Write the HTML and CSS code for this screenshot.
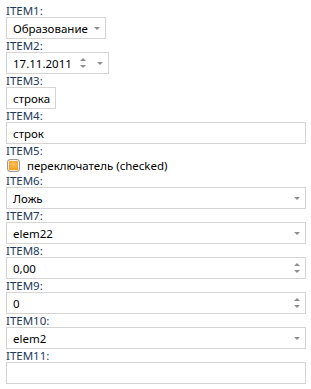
FILE: index.html
```html
<!DOCTYPE html>
<html lang="ru">
<head>
    <meta charset="UTF-8">
    <title>Form</title>
    <link rel="stylesheet" href="styles.css">
</head>
<body>
    <div class="form">
        <div class="item">
            <div class="caption">ITEM1:</div>
            <div class="editor w-combo">
                <span class="value">Образование</span>
                <span class="btn drop"><span class="tri-down"></span></span>
            </div>
        </div>
        <div class="item">
            <div class="caption">ITEM2:</div>
            <div class="editor w-date">
                <span class="value">17.11.2011</span>
                <span class="btn spin"><span class="tri-up"></span><span class="tri-down"></span></span>
                <span class="btn drop"><span class="tri-down"></span></span>
            </div>
        </div>
        <div class="item">
            <div class="caption">ITEM3:</div>
            <div class="editor w-short">
                <span class="value">строка</span>
            </div>
        </div>
        <div class="item">
            <div class="caption">ITEM4:</div>
            <div class="editor">
                <span class="value">строк</span>
            </div>
        </div>
        <div class="item">
            <div class="caption">ITEM5:</div>
            <label class="check">
                <span class="check-box"></span>
                <span>переключатель (checked)</span>
            </label>
        </div>
        <div class="item">
            <div class="caption">ITEM6:</div>
            <div class="editor">
                <span class="value">Ложь</span>
                <span class="btn drop"><span class="tri-down"></span></span>
            </div>
        </div>
        <div class="item">
            <div class="caption">ITEM7:</div>
            <div class="editor">
                <span class="value">elem22</span>
                <span class="btn drop"><span class="tri-down"></span></span>
            </div>
        </div>
        <div class="item">
            <div class="caption">ITEM8:</div>
            <div class="editor">
                <span class="value">0,00</span>
                <span class="btn spin"><span class="tri-up"></span><span class="tri-down"></span></span>
            </div>
        </div>
        <div class="item">
            <div class="caption">ITEM9:</div>
            <div class="editor">
                <span class="value">0</span>
                <span class="btn spin"><span class="tri-up"></span><span class="tri-down"></span></span>
            </div>
        </div>
        <div class="item">
            <div class="caption">ITEM10:</div>
            <div class="editor">
                <span class="value">elem2</span>
                <span class="btn drop"><span class="tri-down"></span></span>
            </div>
        </div>
        <div class="item">
            <div class="caption">ITEM11:</div>
            <div class="editor">
                <span class="value"></span>
            </div>
        </div>
    </div>
</body>
</html>
```

FILE: styles.css
```css
:root {
    --caption-color: #1e395b;
    --border-color: #d4d4d4;
    --arrow-color: #8e8e8e;
}
body {
    margin: 0;
    padding: 4px 5px 0 6px;
    background-color: #fff;
    font-family: 'Noto Sans', sans-serif;
    font-size: 11.5px;
    color: #000;
}
.item {
    display: flex;
    flex-direction: column;
}
.caption {
    height: 13px;
    line-height: 13px;
    color: var(--caption-color);
}
.editor {
    display: flex;
    align-items: center;
    height: 22px;
    box-sizing: border-box;
    border: 1px solid var(--border-color);
    background-color: #fff;
    padding-left: 6px;
}
.w-combo {
    width: 100px;
}
.w-date {
    width: 103px;
}
.w-short {
    width: 50px;
}
.value {
    flex: 1;
    white-space: nowrap;
}
.btn {
    display: flex;
    flex-direction: column;
    align-items: center;
    justify-content: center;
    gap: 4px;
    width: 17px;
    height: 100%;
}
.tri-down, .tri-up {
    width: 0;
    height: 0;
    border-left: 3px solid transparent;
    border-right: 3px solid transparent;
}
.tri-down {
    border-top: 3px solid var(--arrow-color);
}
.tri-up {
    border-bottom: 3px solid var(--arrow-color);
}
.check {
    display: flex;
    align-items: center;
    gap: 7px;
    height: 17px;
    padding-left: 1px;
}
.check-box {
    width: 11px;
    height: 11px;
    border: 1px solid #9a9a9a;
    border-radius: 3px;
    background: radial-gradient(circle at 50% 40%, #ffc36b 0%, #f7a11e 60%, #e88a0c 100%);
    box-shadow: inset 0 0 0 1px #fff3dd;
}
```
